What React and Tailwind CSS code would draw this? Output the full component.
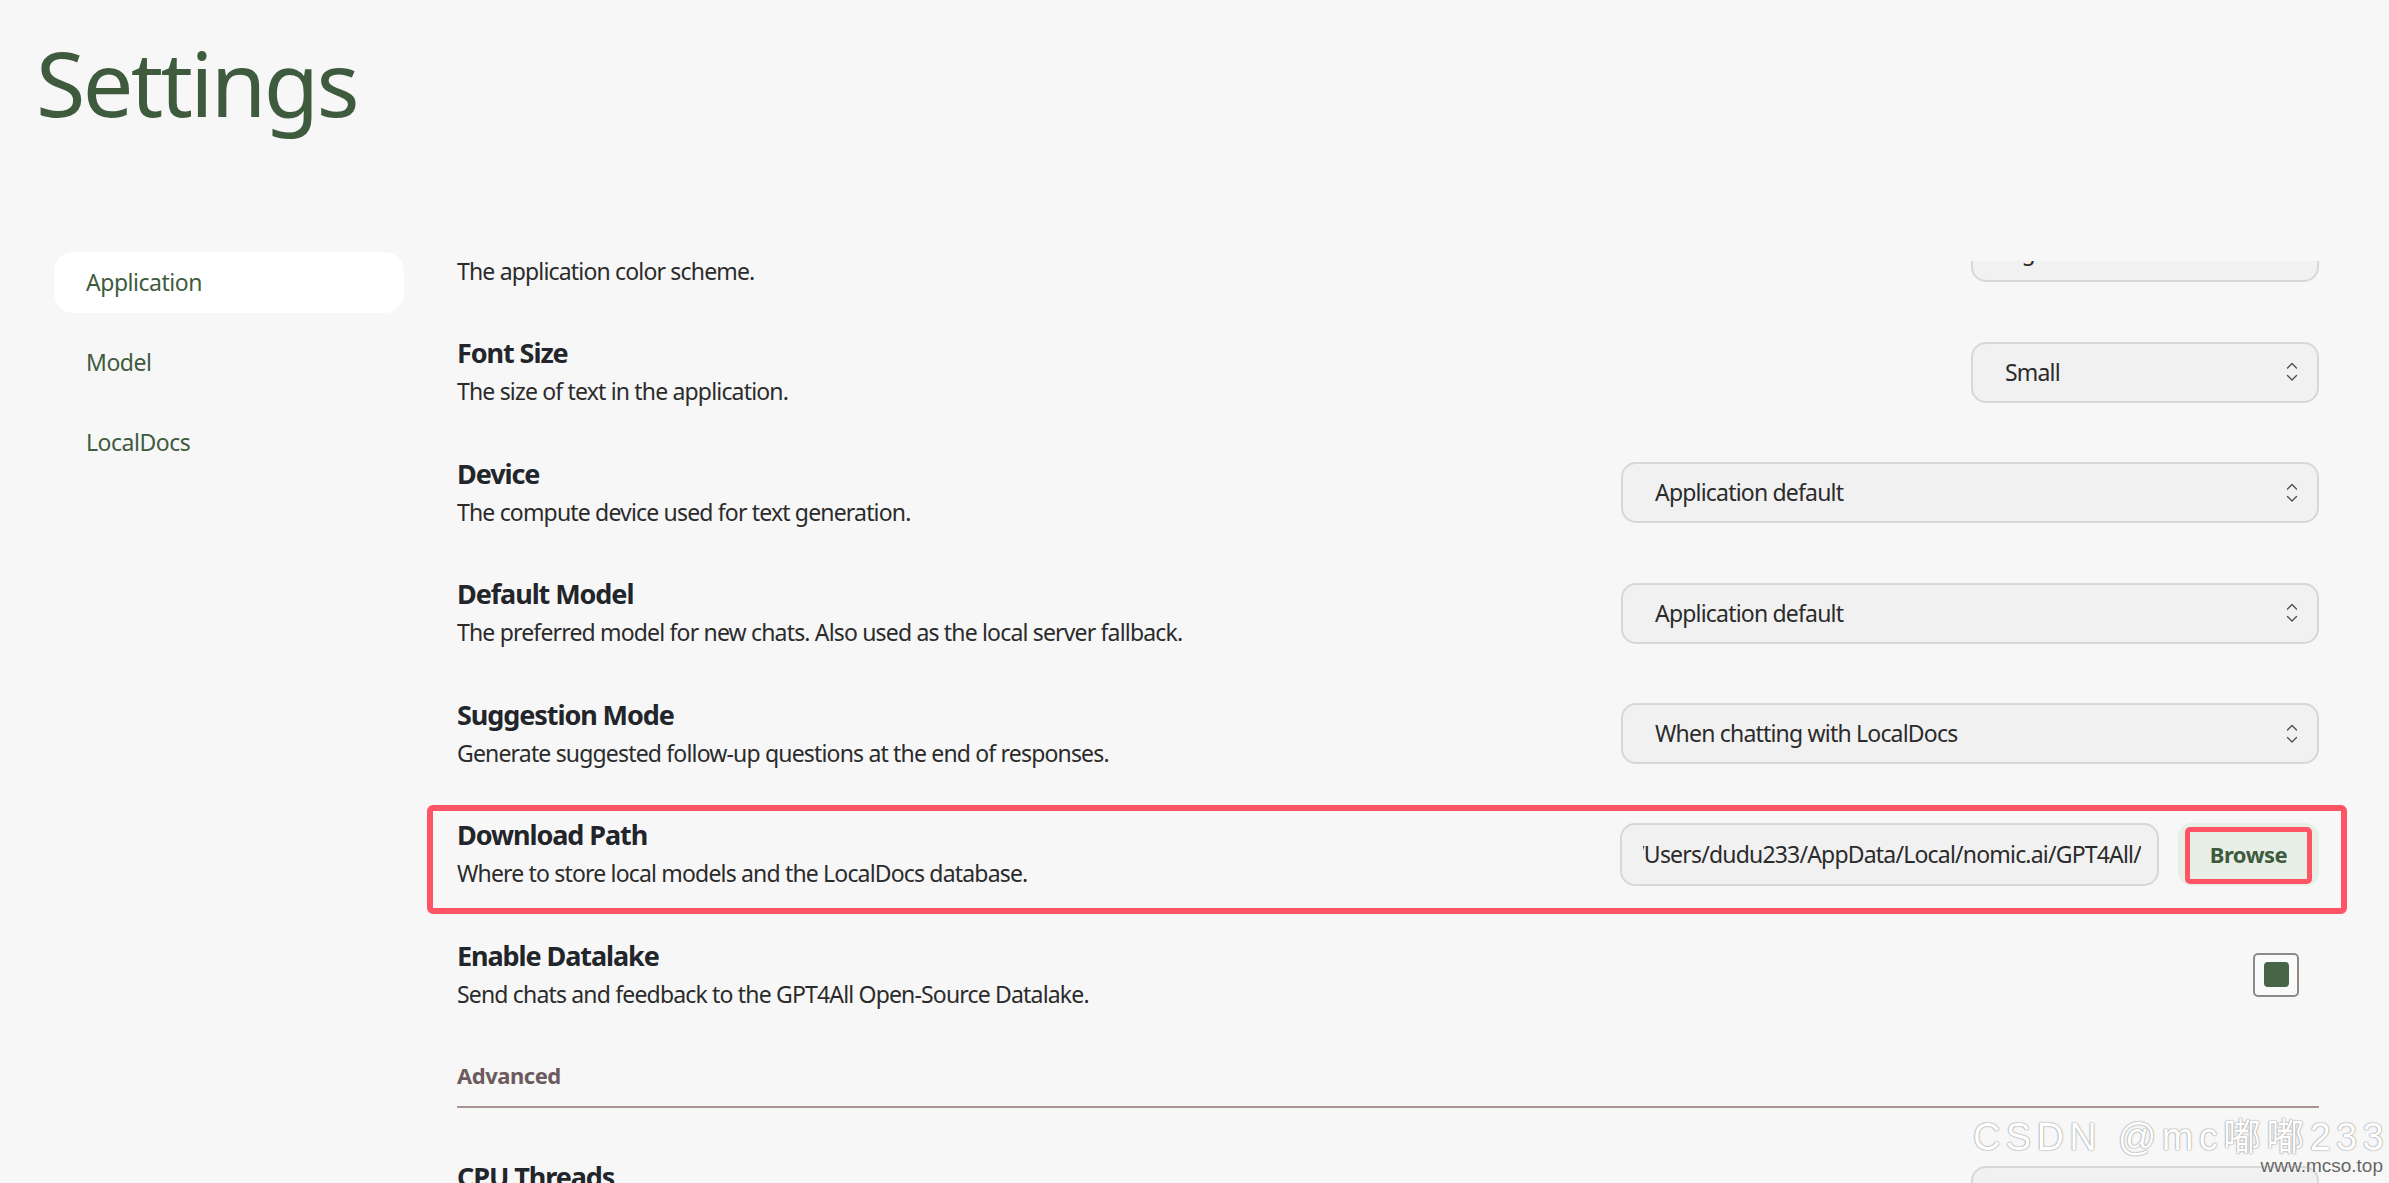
import React from "react";
import clsx from "clsx";

function UpDown() {
  return (
    <svg width="12" height="20" viewBox="0 0 12 20" fill="none" stroke="#505050" strokeWidth="1.4" strokeLinecap="round" strokeLinejoin="round">
      <path d="M1.5 6L6 1.5L10.5 6" />
      <path d="M1.5 13.5L6 18L10.5 13.5" />
    </svg>
  );
}

function Combo({ value, wide }) {
  return (
    <div
      className={clsx(
        "flex h-[61px] shrink-0 items-center justify-between rounded-[15px] border-2 border-[#d7d7d7] bg-[#f1f1f1] pl-[32px] pr-[19px] text-[23px] tracking-[-0.035em] text-[#2b2b2b]",
        wide ? "w-[698px]" : "w-[348px]"
      )}
    >
      <span>{value}</span>
      <UpDown />
    </div>
  );
}

function Row({ title, desc, children, highlight }) {
  return (
    <div className="relative flex h-[61px] shrink-0 items-center justify-between">
      <div className="flex flex-col">
        <div className="text-[27px] leading-[38px] font-bold tracking-[-0.04em] text-[#22252a]">{title}</div>
        <div className="text-[23px] leading-[38px] tracking-[-0.036em] text-[#2b2b2b]">{desc}</div>
      </div>
      {children}
      {highlight && (
        <div className="pointer-events-none absolute -top-[19px] -right-[28px] -bottom-[29px] -left-[30px] rounded-[6px] border-[6px] border-[#ff5466]" />
      )}
    </div>
  );
}

const navItems = ["Application", "Model", "LocalDocs"];

export default function App() {
  return (
    <div className="relative h-[1183px] w-full overflow-hidden bg-[#f7f7f7] font-['Noto_Sans',sans-serif] tracking-[-0.03em]">
      <h1 className="pt-[37px] pl-[36px] text-[90px] leading-none font-normal tracking-[-0.03em] text-[#3e5b3e]">Settings</h1>

      <div className="mt-[125px] flex">
        {/* sidebar */}
        <nav className="ml-[54px] flex w-[350px] shrink-0 flex-col gap-[19px]">
          {navItems.map((item, i) => (
            <div
              key={item}
              className={clsx(
                "flex h-[61px] items-center rounded-[20px] pl-[32px] text-[23px] text-[#3e5b3e]",
                i === 0 && "bg-white"
              )}
            >
              {item}
            </div>
          ))}
        </nav>

        {/* scrolled content */}
        <div className="mt-[9px] h-[922px] flex-1 overflow-hidden pr-[70px] pl-[53px]">
          <div className="-mt-[40px] flex flex-col gap-[59.5px]">
            <Row title="Theme" desc="The application color scheme.">
              <Combo value="Light" />
            </Row>
            <Row title="Font Size" desc="The size of text in the application.">
              <Combo value="Small" />
            </Row>
            <Row title="Device" desc="The compute device used for text generation.">
              <Combo value="Application default" wide />
            </Row>
            <Row title="Default Model" desc="The preferred model for new chats. Also used as the local server fallback.">
              <Combo value="Application default" wide />
            </Row>
            <Row title="Suggestion Mode" desc="Generate suggested follow-up questions at the end of responses.">
              <Combo value="When chatting with LocalDocs" wide />
            </Row>
            <Row title="Download Path" desc="Where to store local models and the LocalDocs database." highlight>
              <div className="flex shrink-0 items-center gap-[19px]">
                <div className="flex h-[63px] w-[539px] items-center overflow-hidden rounded-[15px] border-2 border-[#d7d7d7] bg-[#f1f1f1] pr-[16px] pl-[21px]">
                  <div className="flex w-full justify-end overflow-hidden text-[23px] tracking-[-0.035em] whitespace-nowrap text-[#2b2b2b]">
                    C:/Users/dudu233/AppData/Local/nomic.ai/GPT4All/
                  </div>
                </div>
                <div className="relative flex h-[63px] w-[141px] items-center justify-center rounded-[14px] bg-[#e7efe7] text-[22px] font-bold text-[#3e5b3e]">
                  Browse
                  <div className="pointer-events-none absolute top-[4px] right-[7px] bottom-[2px] left-[7px] rounded-[5px] border-[5px] border-[#ff5466]" />
                </div>
              </div>
            </Row>
            <Row title="Enable Datalake" desc="Send chats and feedback to the GPT4All Open-Source Datalake.">
              <div className="mr-[20px] flex h-[44px] w-[46px] items-center justify-center rounded-[5px] border-2 border-[#8e8a86] bg-[#fafafa]">
                <div className="h-[25px] w-[25px] rounded-[4px] bg-[#476647]" />
              </div>
            </Row>
          </div>

          <div className="mt-[54.5px] text-[22px] leading-[30px] font-bold text-[#6d5a5e]">Advanced</div>
          <div className="mt-[16px] h-[2px] bg-[#a99494]" />

          <div className="mt-[58px]">
            <Row title="CPU Threads" desc="The number of CPU threads used for inference and embedding.">
              <Combo value="4" />
            </Row>
          </div>
        </div>
      </div>

      {/* watermark */}
      <div className="pointer-events-none absolute top-[1118px] left-[1973px] font-['Liberation_Sans','Noto_Sans_CJK_SC',sans-serif] text-[38px] leading-none tracking-[0.14em] whitespace-nowrap text-white [text-shadow:0_0_1px_#8a8a8a,0_0_2px_#9a9a9a]">
        CSDN @mc嘟嘟233
      </div>
      <div className="pointer-events-none absolute top-[1156px] right-[6px] font-['Liberation_Sans',sans-serif] text-[19px] leading-none tracking-normal text-[#666] [text-shadow:0_0_2px_#fff]">
        www.mcso.top
      </div>
    </div>
  );
}
